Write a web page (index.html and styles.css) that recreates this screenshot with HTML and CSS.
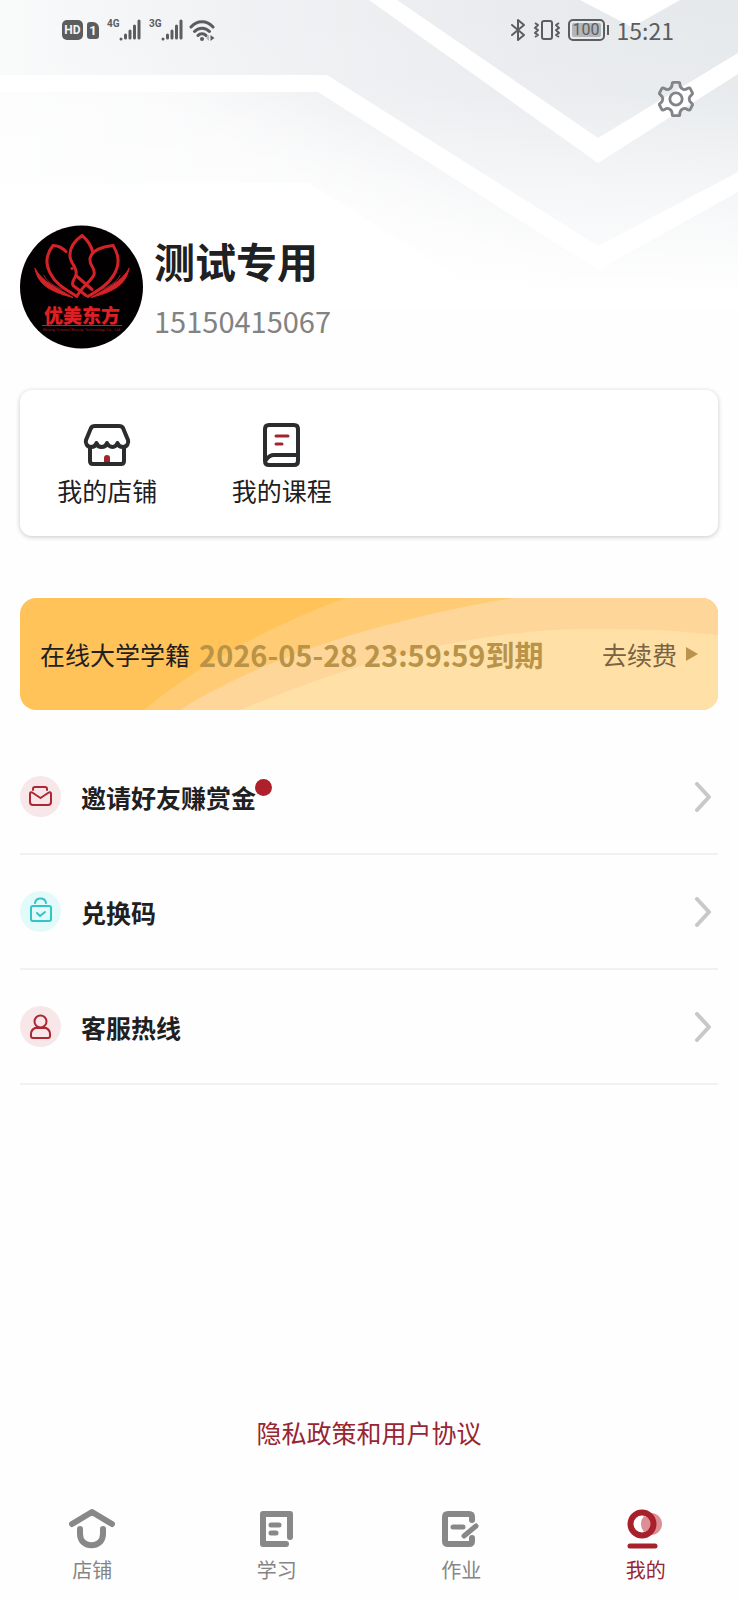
FILE: index.html
```html
<!DOCTYPE html>
<html lang="zh-CN">
<head>
    <meta charset="UTF-8">
    <meta name="viewport" content="width=device-width, initial-scale=1">
    <title>我的</title>
    <link rel="stylesheet" href="styles.css">
</head>
<body>
    <!-- 顶部背景 -->
    <svg class="hero-bg" viewBox="0 0 738 310" preserveAspectRatio="xMaxYMin slice" aria-hidden="true">
        <defs>
            <linearGradient id="bgTop" x1="0" y1="0" x2="1" y2="0">
                <stop offset="0" stop-color="#f9fafa"/>
                <stop offset="0.3" stop-color="#f1f2f4"/>
                <stop offset="0.7" stop-color="#e9ebee"/>
                <stop offset="1" stop-color="#e5e9eb"/>
            </linearGradient>
            <linearGradient id="bgFade" x1="0" y1="0" x2="0" y2="1">
                <stop offset="0" stop-color="#fff" stop-opacity="0"/>
                <stop offset="0.3" stop-color="#fff" stop-opacity="0.1"/>
                <stop offset="0.62" stop-color="#fff" stop-opacity="0.6"/>
                <stop offset="0.95" stop-color="#fff"/>
            </linearGradient>
            <linearGradient id="bgLeft" gradientUnits="userSpaceOnUse" x1="300" y1="184" x2="350" y2="100">
                <stop offset="0" stop-color="#fff" stop-opacity="0.6"/>
                <stop offset="1" stop-color="#fff" stop-opacity="0"/>
            </linearGradient>
        </defs>
        <path fill="url(#bgTop)" d="M0 0H738V310H510L310 183H0z"/>
        <path fill="url(#bgLeft)" d="M0 84H322L590 254L510 310L310 183H0z"/>
        <path fill="url(#bgFade)" d="M0 0H738V310H0z"/>
        <path fill="#fff" d="M580 0H680L632 27z"/>
        <path fill="#fff" d="M369 0H397L598 138L738 53V74L598 163z"/>
        <path fill="#fff" d="M0 75H327L598 246L738 172V192L598 270L318 92H0z"/>
    </svg>

    <div class="status-bar">
        <div class="status-left">
            <span class="badge-hd">HD</span>
            <span class="badge-sim">1</span>
            <span class="signal">
                <span class="signal-type">4G</span>
                <svg width="22" height="22" viewBox="0 0 22 22" stroke="#5c5d5f" stroke-width="3" stroke-linecap="round"><path d="M2 20v0M6.500 19v-3M11 19v-7M15.500 19V7M20 19V2"/></svg>
            </span>
            <span class="signal">
                <span class="signal-type">3G</span>
                <svg width="22" height="22" viewBox="0 0 22 22" stroke="#5c5d5f" stroke-width="3" stroke-linecap="round"><path d="M2 20v0M6.500 19v-3M11 19v-7M15.500 19V7M20 19V2"/></svg>
            </span>
            <svg class="wifi" width="26" height="23" viewBox="0 0 26 23" fill="none" stroke="#5c5d5f" stroke-width="3" stroke-linecap="round">
                <path d="M2 8C8 1 18 1 24 8M5.500 12.500C9.500 8 16.500 8 20.500 12.500M9 16.500C11 14 15 14 17 16.500"/>
                <circle cx="13" cy="20" r="2" fill="#5c5d5f" stroke="none"/>
                <path d="M21.500 16v6l4-3z" fill="#5c5d5f" stroke="none"/>
                <path d="M20 16v6l-3-3z" fill="#b5b7ba" stroke="none"/>
            </svg>
        </div>
        <div class="status-right">
            <svg width="16" height="24" viewBox="0 0 16 24" fill="none" stroke="#5c5d5f" stroke-width="2" stroke-linejoin="round" stroke-linecap="round"><path d="M2 7l12 10-6 5V2l6 5L2 17"/></svg>
            <svg width="28" height="22" viewBox="0 0 28 22" fill="none" stroke="#5c5d5f" stroke-width="2" stroke-linejoin="round"><rect x="9" y="2" width="10" height="18" rx="2"/><path d="M2 4l3 2-3 3 3 2-3 3 3 2-3 2M26 4l-3 2 3 3-3 2 3 3-3 2 3 2"/></svg>
            <span class="battery"><span class="battery-level">100</span></span>
            <span class="clock">15:21</span>
        </div>
    </div>

    <div class="toolbar">
        <button class="btn-setting" aria-label="设置">
            <svg width="38" height="40" viewBox="0 0 40 40" fill="none" stroke="#828588" stroke-width="3" stroke-linejoin="round">
                <path d="M17 2.500h6q1 0 1 1.500c0 3 1 4.500 3 5.500 1.500 1 3.500.5 5-.5q2-1.500 3 0l2 4q1 1.500-.5 2.500c-3.500 2.500-3.500 6.500 0 9q1.500 1 .5 2.500l-2 4q-1 1.500-3 0c-1.500-1-3.500-1.500-5-.5-2 1-3 2.500-3 5.500q0 1.500-1 1.500h-6q-1 0-1-1.500c0-3-1-4.500-3-5.500-1.500-1-3.500-.5-5 .5q-2 1.500-3 0l-2-4q-1-1.500.5-2.500c3.500-2.500 3.500-6.500 0-9q-1.500-1-.5-2.500l2-4q1-1.500 3 0c1.500 1 3.500 1.500 5 .5 2-1 3-2.500 3-5.500q0-1.500 1-1.500z"/>
                <circle cx="20" cy="20" r="6.500"/>
            </svg>
        </button>
    </div>

    <div class="profile">
        <svg class="avatar" viewBox="0 0 123 123" role="img" aria-label="优美东方">
            <circle cx="61.500" cy="61.500" r="61.500" fill="#020001"/>
            <g fill="none" stroke="#d42226" stroke-width="3" stroke-linecap="round" stroke-linejoin="round">
                <path d="M46 26C42 22 38 20 33 20C26 29 25 39 31 49C36 59 46 64 57 71"/>
                <path d="M73 27C71 20 67 14 62 10C55 15 50 21 50 29C49 37 58 42 56 49C55 54 51 56 53 60L66 70"/>
                <path d="M52 43L52 43"/>
                <path d="M93 20C84 21 72 24 70 33C69 41 76 42 74 49C72 55 64 59 58 69"/>
                <path d="M93 20C99 29 100 39 94 49C89 58 80 64 68 71"/>
                <path d="M56 50L72 64"/>
                <path d="M15 43C18 61 34 67 53 72C36 62 22 56 15 43z" fill="#d42226" stroke-width="1"/>
                <path d="M109 43C106 61 90 67 71 72C88 62 102 56 109 43z" fill="#d42226" stroke-width="1"/>
                <path d="M24 50C28 58 36 61 42 64M100 50C96 58 88 61 82 64" stroke="#8c2b38" stroke-width="1"/>
            </g>
            <text class="logo-name" x="62" y="97" text-anchor="middle">优美东方</text>
            <path d="M22 100H102" stroke="#c01f24" stroke-width="1"/>
            <text class="logo-sub" x="62" y="105" text-anchor="middle">Beijing Oriental Beauty Technology Co., Ltd.</text>
        </svg>
        <div class="profile-info">
            <h1 class="profile-name">测试专用</h1>
            <p class="profile-phone">15150415067</p>
        </div>
    </div>

    <div class="card">
        <a class="card-item" href="#">
            <svg width="48" height="44" viewBox="0 0 48 44" fill="none" stroke="#2b2c2e" stroke-width="4" stroke-linejoin="round" stroke-linecap="round">
                <path d="M12 3h24q3 0 4 2l5 12c1 3-1 7-5 7-3 0-5-2-5.500-4-.5 2-2.500 4-5 4s-5-2-5.500-4c-.5 2-2.500 4-5.500 4s-4.500-2-5-4c-.5 2-2.500 4-5.500 4-4 0-6-4-5-7L8 5q1-2 4-2z"/>
                <path d="M7 24v14q0 3 3 3h28q3 0 3-3V24"/>
                <path d="M21 39v-4q0-3 3-3t3 3v4z" fill="#a3242f" stroke="none"/>
            </svg>
            <span>我的店铺</span>
        </a>
        <a class="card-item" href="#">
            <svg width="48" height="44" viewBox="0 0 48 44" fill="none" stroke="#2b2c2e" stroke-width="4" stroke-linejoin="round" stroke-linecap="round">
                <path d="M11 2h25q4 0 4 4v32q0 4-4 4H11q-4 0-4-4V6q0-4 4-4zM8 37c2-3 5-5 8-5h24"/>
                <path d="M18 13h12M18 21h6" stroke="#a3242f" stroke-width="3"/>
            </svg>
            <span>我的课程</span>
        </a>
    </div>

    <a class="renew" href="#">
        <svg class="renew-bg" viewBox="0 0 698 112" preserveAspectRatio="none" aria-hidden="true">
            <path fill="#ffcc75" d="M124 112C180 66 250 28 325 0H698V112z"/>
            <path fill="#ffd699" d="M160 112C240 62 350 24 493 0H698V112z"/>
            <path fill="#ffe1a8" d="M220 112C330 66 450 31 570 31Q640 30 698 37V112z"/>
        </svg>
        <span class="renew-title">在线大学学籍</span>
        <span class="renew-date">2026-05-28 23:59:59到期</span>
        <span class="renew-action">去续费</span>
        <svg width="12" height="14" viewBox="0 0 12 14"><path d="M0 0l12 7-12 7z" fill="#ba944c"/></svg>
    </a>

    <ul class="menu">
        <li>
            <a class="menu-item" href="#">
                <svg class="menu-icon" width="41" height="41" viewBox="0 0 41 41" fill="none" stroke="#ac2733" stroke-width="2" stroke-linejoin="round" stroke-linecap="round">
                    <circle cx="20.500" cy="20.500" r="20.500" fill="#f8e7e9" stroke="none"/>
                    <path d="M13 14v-1q0-2 2-2h10q2 0 2 2v1M10 18q0-3 3-1l7.500 5 7.500-5q3-2 3 1v8q0 3-3 3H13q-3 0-3-3z"/>
                </svg>
                <span class="menu-text">邀请好友赚赏金<i class="dot"></i></span>
                <svg class="arrow" width="18" height="30" viewBox="0 0 18 30"><path d="M3 2l12 13L3 28"/></svg>
            </a>
        </li>
        <li>
            <a class="menu-item" href="#">
                <svg class="menu-icon" width="41" height="41" viewBox="0 0 41 41" fill="none" stroke="#31c5c7" stroke-width="2" stroke-linejoin="round" stroke-linecap="round">
                    <circle cx="20.500" cy="20.500" r="20.500" fill="#e2fbfa" stroke="none"/>
                    <rect x="11" y="15" width="20" height="15" rx="2"/>
                    <path d="M15 12c1-6 10-6 11 0M17 22l3 3 5-4"/>
                </svg>
                <span class="menu-text">兑换码</span>
                <svg class="arrow" width="18" height="30" viewBox="0 0 18 30"><path d="M3 2l12 13L3 28"/></svg>
            </a>
        </li>
        <li>
            <a class="menu-item" href="#">
                <svg class="menu-icon" width="41" height="41" viewBox="0 0 41 41" fill="none" stroke="#ac2733" stroke-width="2" stroke-linejoin="round">
                    <circle cx="20.500" cy="20.500" r="20.500" fill="#f8e7e9" stroke="none"/>
                    <circle cx="20.500" cy="15.500" r="6"/>
                    <path d="M15 22h11q4 2 4 6v2q0 2-2 2H13q-2 0-2-2v-2q0-4 4-6z"/>
                </svg>
                <span class="menu-text">客服热线</span>
                <svg class="arrow" width="18" height="30" viewBox="0 0 18 30"><path d="M3 2l12 13L3 28"/></svg>
            </a>
        </li>
    </ul>

    <a class="agreement" href="#">隐私政策和用户协议</a>

    <!-- 底部导航 -->
    <nav class="tabbar">
        <a class="tab" href="#">
            <svg width="48" height="42" viewBox="0 0 48 42" fill="none" stroke="#888" stroke-width="6" stroke-linejoin="round" stroke-linecap="round"><path d="M4 17L24 5l20 12M12 22v5c0 15 23 15 23 0v-5"/></svg>
            <span>店铺</span>
        </a>
        <a class="tab" href="#">
            <svg width="48" height="42" viewBox="0 0 48 42" fill="none" stroke="#888" stroke-width="6" stroke-linejoin="round" stroke-linecap="round"><path d="M37 30V7H10v30h23"/><path d="M18 18h8M18 26h5" stroke-width="5"/></svg>
            <span>学习</span>
        </a>
        <a class="tab" href="#">
            <svg width="48" height="42" viewBox="0 0 48 42" fill="none" stroke="#888" stroke-width="6" stroke-linejoin="round" stroke-linecap="round"><path d="M35 13v-3q0-3-3-3H11q-3 0-3 3v24q0 3 3 3h21q3 0 3-3v-3"/><path d="M16 20h10M27 29l12-10" stroke-width="5"/></svg>
            <span>作业</span>
        </a>
        <a class="tab active" href="#">
            <svg width="48" height="42" viewBox="0 0 48 42" fill="none"><circle cx="29" cy="17" r="11" fill="#dd8f95"/><circle cx="20" cy="17" r="9" fill="#fff"/><path d="M22 9a12 12 0 0 0 0 16q7-2 7-8t-7-8z" fill="#dd8f95"/><circle cx="20" cy="17" r="11.500" stroke="#a8202b" stroke-width="6"/><path d="M8 39h25" stroke="#a8202b" stroke-width="5" stroke-linecap="round"/></svg>
            <span>我的</span>
        </a>
    </nav>
</body>
</html>
```
FILE: styles.css
```css
* {
    box-sizing: border-box;
}

body {
    position: relative;
    display: flex;
    flex-direction: column;
    min-height: 100vh;
    margin: 0;
    background-color: #fefefe;
    color: #1f2021;
    font-family: "Noto Sans CJK SC", sans-serif;
    font-size: 25px;
    line-height: 36px;
}

a {
    color: inherit;
    text-decoration: none;
}

svg {
    display: block;
    flex-shrink: 0;
}

.hero-bg {
    position: absolute;
    top: 0;
    left: 0;
    z-index: -1;
    width: 100%;
    height: 310px;
}

/* 状态栏 */
.status-bar {
    display: flex;
    justify-content: space-between;
    align-items: center;
    height: 60px;
    padding: 0 64px 0 62px;
    color: #5c5d5f;
}

.status-left,
.status-right {
    display: flex;
    align-items: center;
}

.status-right {
    gap: 7px;
}

.badge-hd,
.badge-sim {
    background-color: #5c5d5f;
    color: #f5f6f7;
    font-family: Roboto, sans-serif;
    font-weight: bold;
    text-align: center;
}

.badge-hd {
    width: 21px;
    border-radius: 5px;
    font-size: 12px;
    line-height: 20px;
}

.badge-sim {
    width: 12px;
    margin-left: 4px;
    border-radius: 3px 6px 3px 3px;
    font-size: 13px;
    line-height: 17px;
}

.signal {
    display: flex;
    align-items: flex-start;
    margin-left: 8px;
}

.signal-type {
    width: 12px;
    font-family: Roboto, sans-serif;
    font-size: 10px;
    font-weight: bold;
    line-height: 10px;
}

.wifi {
    margin-left: 6px;
}

.battery {
    position: relative;
    width: 37px;
    height: 22px;
    margin-right: 5px;
    padding: 2px;
    border: 2px solid #5c5d5f;
    border-radius: 5px;
}

.battery::after {
    content: "";
    position: absolute;
    top: 4px;
    right: -6px;
    width: 2px;
    height: 10px;
    background-color: #5c5d5f;
}

.battery-level {
    display: block;
    border-radius: 2px;
    background-color: #b3b6b8;
    font-family: Roboto, sans-serif;
    font-size: 16px;
    line-height: 14px;
    text-align: center;
}

.clock {
    font-size: 23px;
    line-height: 24px;
}

.toolbar {
    display: flex;
    justify-content: flex-end;
    padding: 19px 43px 0;
}

.btn-setting {
    padding: 0;
    border: none;
    background: none;
    cursor: pointer;
}

/* 用户信息 */
.profile {
    display: flex;
    align-items: center;
    gap: 11px;
    margin: 106px 20px 0;
}

.avatar {
    width: 123px;
    height: 124px;
}

.logo-name {
    fill: #e01f24;
    font-size: 19px;
    font-weight: 900;
}

.logo-sub {
    fill: #a01b20;
    font-family: "Liberation Sans", sans-serif;
    font-size: 4px;
}

.profile-name {
    margin: 0;
    font-size: 41px;
    font-weight: bold;
    line-height: 60px;
}

.profile-phone {
    margin: 6px 0 0;
    color: #828282;
    font-size: 29px;
    line-height: 48px;
}

.card {
    display: grid;
    grid-template-columns: repeat(4, 1fr);
    margin: 41px 20px 0;
    padding: 33px 0 28px;
    border-radius: 12px;
    background-color: #fff;
    box-shadow: 0 1px 5px rgba(0, 0, 0, 0.22);
}

.card-item {
    display: flex;
    flex-direction: column;
    align-items: center;
    gap: 5px;
}

/* 续费 */
.renew {
    position: relative;
    display: flex;
    align-items: center;
    height: 112px;
    margin: 62px 20px 0;
    padding: 0 20px;
    overflow: hidden;
    border-radius: 16px;
    background-color: #ffc35a;
}

.renew-bg {
    position: absolute;
    top: 0;
    left: 0;
    z-index: 0;
    width: 100%;
    height: 100%;
}

.renew > :not(.renew-bg) {
    position: relative;
}

.renew-date {
    margin-left: 9px;
    color: #b99347;
    font-size: 29px;
    font-weight: bold;
}

.renew-action {
    margin-left: auto;
    margin-right: 9px;
    color: #796343;
}

.menu {
    margin: 30px 20px 0;
    padding: 0;
    list-style: none;
}

.menu-item {
    display: flex;
    align-items: center;
    height: 115px;
    padding-right: 6px;
    border-bottom: 2px solid #f1f1f1;
    font-weight: bold;
}

.menu-icon {
    margin-right: 20px;
}

.menu-text {
    position: relative;
}

.dot {
    position: absolute;
    top: 0;
    right: -16px;
    width: 17px;
    height: 17px;
    border-radius: 50%;
    background-color: #b01f2c;
}

.arrow {
    margin-left: auto;
    fill: none;
    stroke: #c8c8c8;
    stroke-width: 4;
    stroke-linecap: round;
    stroke-linejoin: round;
}

.agreement {
    align-self: center;
    margin-top: auto;
    color: #982531;
}

.tabbar {
    display: grid;
    grid-template-columns: repeat(4, 1fr);
    padding: 57px 0 13px;
    color: #858585;
    font-size: 20px;
    line-height: 34px;
}

.tab {
    display: flex;
    flex-direction: column;
    align-items: center;
    gap: 4px;
}

.tab.active {
    color: #982531;
}
```
